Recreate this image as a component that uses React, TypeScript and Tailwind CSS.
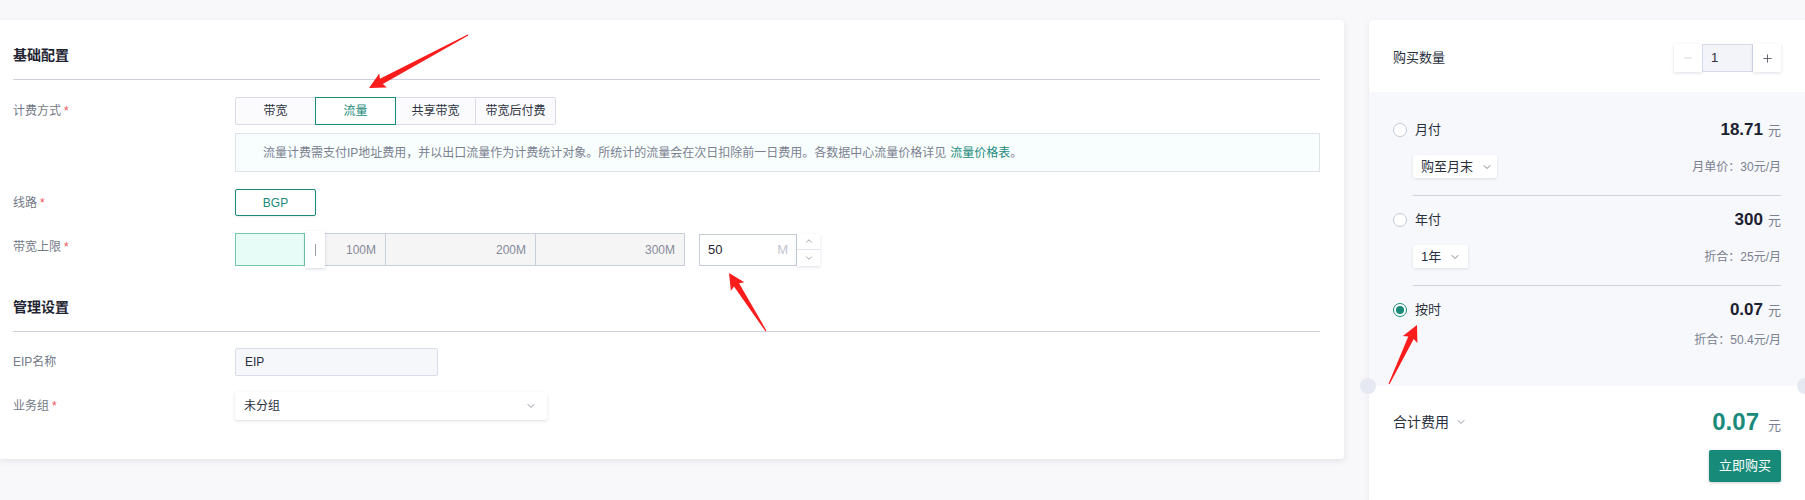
import { ChevronDown, ChevronUp, Minus, Plus } from 'lucide-react';

type Pt = [number, number];

// red annotation arrow, thin at the tail and wider toward the head
const arrowPoints = (tail: Pt, tip: Pt) => {
  const dx = tip[0] - tail[0];
  const dy = tip[1] - tail[1];
  const len = Math.hypot(dx, dy);
  const ux = dx / len;
  const uy = dy / len;
  const nx = -uy;
  const ny = ux;
  const head = 16;
  const bx = tip[0] - ux * head;
  const by = tip[1] - uy * head;
  const pts: Pt[] = [
    [tail[0] + nx * 0.6, tail[1] + ny * 0.6],
    [bx + ux * 2 + nx * 3, by + uy * 2 + ny * 3],
    [bx + nx * 8, by + ny * 8],
    tip,
    [bx - nx * 8, by - ny * 8],
    [bx + ux * 2 - nx * 3, by + uy * 2 - ny * 3],
    [tail[0] - nx * 0.6, tail[1] - ny * 0.6],
  ];
  return pts.map((p) => `${p[0].toFixed(1)},${p[1].toFixed(1)}`).join(' ');
};

const Label = ({ text, required }: { text: string; required?: boolean }) => (
  <div className="w-[222px] shrink-0 text-[12px] text-[#737987] leading-[28px]">
    {text}
    {required && <span className="ml-[3px] text-[#f0524f]">*</span>}
  </div>
);

const SectionTitle = ({ text, top }: { text: string; top: string }) => (
  <div className={`${top} pb-[14px] border-b border-[#cdd1dc] text-[14px] leading-5 font-bold text-[#1f2433]`}>
    {text}
  </div>
);

const Radio = ({ checked }: { checked?: boolean }) => (
  <span
    className={`w-[14px] h-[14px] rounded-full border bg-white flex items-center justify-center ${
      checked ? 'border-[#1a8a7b]' : 'border-[#c3c8d6]'
    }`}
  >
    {checked && <span className="w-[8px] h-[8px] rounded-full bg-[#1a8a7b]" />}
  </span>
);

const PriceRow = ({ name, price, checked }: { name: string; price: string; checked?: boolean }) => (
  <div className="flex items-center justify-between h-5">
    <div className="flex items-center gap-[8px]">
      <Radio checked={checked} />
      <span className="text-[13px] text-[#2a2f3d]">{name}</span>
    </div>
    <div className="flex items-baseline">
      <span className="text-[17px] font-bold text-[#1c2130]">{price}</span>
      <span className="ml-[5px] text-[13px] text-[#7a8090]">元</span>
    </div>
  </div>
);

const MiniSelect = ({ text, w }: { text: string; w: string }) => (
  <div className={`${w} h-[23px] bg-white rounded-[2px] shadow-[0_1px_3px_rgba(30,40,80,0.12)] flex items-center gap-[8px] pl-[8px] text-[13px] text-[#2a2f3d]`}>
    {text}
    <ChevronDown size={12} strokeWidth={1.5} className="text-[#555b6a]" />
  </div>
);

const segments = ['带宽', '流量', '共享带宽', '带宽后付费'];

export default function App() {
  return (
    <div className="relative h-[500px] overflow-hidden bg-[#f8f8fa] flex items-start gap-[25px] pt-[20px] [font-family:'Liberation_Sans','Noto_Sans_CJK_SC',sans-serif]">
      {/* left form card */}
      <div className="w-[1344px] h-[439px] shrink-0 bg-white rounded-r-[4px] shadow-[0_2px_6px_rgba(40,50,90,0.1)] pl-[13px] pr-[24px]">
        <SectionTitle text="基础配置" top="pt-[25px]" />

        <div className="flex pt-[17px]">
          <Label text="计费方式" required />
          <div className="flex-1">
            <div className="flex h-[28px]">
              {segments.map((s, i) => (
                <div
                  key={s}
                  className={`w-[81px] h-[28px] flex items-center justify-center text-[12px] border -ml-px first:ml-0 ${
                    i === 1
                      ? 'relative z-10 border-[#1a8a7b] text-[#1a8a7b] bg-white'
                      : 'border-[#d8dbe6] text-[#2f3443] bg-[#fbfbfd]'
                  } ${i === 0 ? 'rounded-l-[2px]' : ''} ${i === 3 ? 'rounded-r-[2px]' : ''}`}
                >
                  {s}
                </div>
              ))}
            </div>
            <div className="mt-[8px] h-[39px] flex items-center pl-[27px] border border-[#dfe2e8] bg-[#f8fefd] text-[12px] text-[#7b8190]">
              流量计费需支付IP地址费用，并以出口流量作为计费统计对象。所统计的流量会在次日扣除前一日费用。各数据中心流量价格详见
              <span className="ml-[4px] text-[#1a8a7b]">流量价格表</span>。
            </div>
          </div>
        </div>

        <div className="flex pt-[17px]">
          <Label text="线路" required />
          <div className="w-[81px] h-[27px] flex items-center justify-center border border-[#1a8a7b] rounded-[2px] text-[12px] text-[#1a8a7b] shadow-[0_1px_2px_rgba(0,0,0,0.08)]">
            BGP
          </div>
        </div>

        <div className="flex pt-[16px]">
          <Label text="带宽上限" required />
          <div className="flex items-center">
            <div className="relative flex h-[33px]">
              <div className="w-[151px] h-full border border-[#c9cedc] bg-[#f5f5f6] flex items-center justify-end pr-[9px] text-[12px] text-[#868b99]">
                100M
              </div>
              <div className="w-[150px] h-full border border-l-0 border-[#c9cedc] bg-[#f5f5f6] flex items-center justify-end pr-[9px] text-[12px] text-[#868b99]">
                200M
              </div>
              <div className="w-[149px] h-full border border-l-0 border-[#c9cedc] bg-[#f5f5f6] flex items-center justify-end pr-[9px] text-[12px] text-[#868b99]">
                300M
              </div>
              <div className="absolute left-0 top-0 w-[70px] h-full border border-[#74c7a9] bg-[#e7fcf6]" />
              <div className="absolute left-[70px] top-[-2px] w-[20px] h-[37px] bg-white shadow-[0_1px_3px_rgba(30,40,80,0.18)] flex items-center justify-center">
                <span className="w-px h-[12px] bg-[#9aa0ad]" />
              </div>
            </div>
            <div className="ml-[14px] flex h-[32px]">
              <div className="w-[98px] h-full border border-[#c9cedc] flex items-center justify-between pl-[8px] pr-[8px] text-[13px]">
                <span className="text-[#1f2433]">50</span>
                <span className="text-[#c0c4cf]">M</span>
              </div>
              <div className="w-[23px] h-full flex flex-col shadow-[0_1px_3px_rgba(30,40,80,0.15)] bg-white">
                <div className="flex-1 flex items-center justify-center border-b border-[#e3e5ec]">
                  <ChevronUp size={10} strokeWidth={1.5} className="text-[#6b7180]" />
                </div>
                <div className="flex-1 flex items-center justify-center">
                  <ChevronDown size={10} strokeWidth={1.5} className="text-[#6b7180]" />
                </div>
              </div>
            </div>
          </div>
        </div>

        <SectionTitle text="管理设置" top="pt-[31px]" />

        <div className="flex pt-[16px]">
          <Label text="EIP名称" />
          <div className="w-[203px] h-[28px] border border-[#d9dcea] bg-[#f6f7fb] rounded-[2px] flex items-center pl-[9px] text-[12px] text-[#2a2f3d]">
            EIP
          </div>
        </div>

        <div className="flex pt-[16px]">
          <Label text="业务组" required />
          <div className="w-[312px] h-[28px] bg-white rounded-[2px] shadow-[0_1px_3px_rgba(30,40,80,0.15)] flex items-center justify-between pl-[9px] pr-[10px] text-[12px] text-[#2a2f3d]">
            未分组
            <ChevronDown size={12} strokeWidth={1.5} className="text-[#6b7180]" />
          </div>
        </div>
      </div>

      {/* right order panel */}
      <div className="relative w-[436px] h-[480px] shrink-0 bg-white rounded-tl-[4px] shadow-[0_2px_6px_rgba(40,50,90,0.08)]">
        <div className="flex items-center justify-between px-[24px] pt-[24px] pb-[20px]">
          <span className="text-[13px] text-[#2a2f3d]">购买数量</span>
          <div className="flex h-[28px]">
            <div className="w-[28px] h-full bg-white shadow-[0_1px_3px_rgba(30,40,80,0.15)] flex items-center justify-center">
              <Minus size={12} strokeWidth={1.2} className="text-[#b9bdc8]" />
            </div>
            <div className="w-[51px] h-full border border-[#d5d9ea] bg-[#f3f4fa] flex items-center pl-[8px] text-[13px] text-[#2a2f3d]">
              1
            </div>
            <div className="w-[28px] h-full bg-white shadow-[0_1px_3px_rgba(30,40,80,0.15)] flex items-center justify-center">
              <Plus size={13} strokeWidth={1.4} className="text-[#3a3f4d]" />
            </div>
          </div>
        </div>

        <div className="relative bg-[#f7f8fb] px-[24px] pt-[14px] h-[294px]">
          <div className="pt-[14px] pb-[17px] border-b border-[#cfd3de] ml-[20px]">
            <div className="-ml-[20px]">
              <PriceRow name="月付" price="18.71" />
            </div>
            <div className="mt-[15px] flex items-center justify-between">
              <MiniSelect text="购至月末" w="w-[84px]" />
              <span className="text-[12px] text-[#7a8090]">月单价：30元/月</span>
            </div>
          </div>
          <div className="pt-[14px] pb-[17px] border-b border-[#cfd3de] ml-[20px]">
            <div className="-ml-[20px]">
              <PriceRow name="年付" price="300" />
            </div>
            <div className="mt-[15px] flex items-center justify-between">
              <MiniSelect text="1年" w="w-[55px]" />
              <span className="text-[12px] text-[#7a8090]">折合：25元/月</span>
            </div>
          </div>
          <div className="pt-[14px]">
            <PriceRow name="按时" price="0.07" checked />
            <div className="mt-[12px] text-right text-[12px] leading-4 text-[#7a8090]">折合：50.4元/月</div>
          </div>
          <span className="absolute left-[-9px] bottom-[-8px] w-[16px] h-[16px] rounded-full bg-[#e6e9f2]" />
          <span className="absolute right-[-8px] bottom-[-8px] w-[16px] h-[16px] rounded-full bg-[#e6e9f2]" />
        </div>

        <div className="px-[24px] pt-[20px]">
          <div className="flex items-center justify-between h-[32px]">
            <div className="flex items-center gap-[6px]">
              <span className="text-[14px] text-[#2a2f3d]">合计费用</span>
              <ChevronDown size={12} strokeWidth={1.5} className="text-[#6b7180]" />
            </div>
            <div className="flex items-baseline">
              <span className="text-[24px] font-bold text-[#1a8a7b]">0.07</span>
              <span className="ml-[9px] text-[13px] text-[#7a8090]">元</span>
            </div>
          </div>
          <div className="mt-[12px] flex justify-end">
            <button className="w-[72px] h-[32px] rounded-[2px] bg-[#178a7a] text-white text-[13px] shadow-[0_1px_3px_rgba(0,0,0,0.2)]">
              立即购买
            </button>
          </div>
        </div>
      </div>

      {/* annotation arrows */}
      <svg className="absolute inset-0 pointer-events-none" width="1805" height="500">
        <polygon points={arrowPoints([468, 35], [369, 88])} fill="#fb1c1c" />
        <polygon points={arrowPoints([766, 331], [729, 273])} fill="#fb1c1c" />
        <polygon points={arrowPoints([1389, 384], [1417, 325])} fill="#fb1c1c" />
      </svg>
    </div>
  );
}
